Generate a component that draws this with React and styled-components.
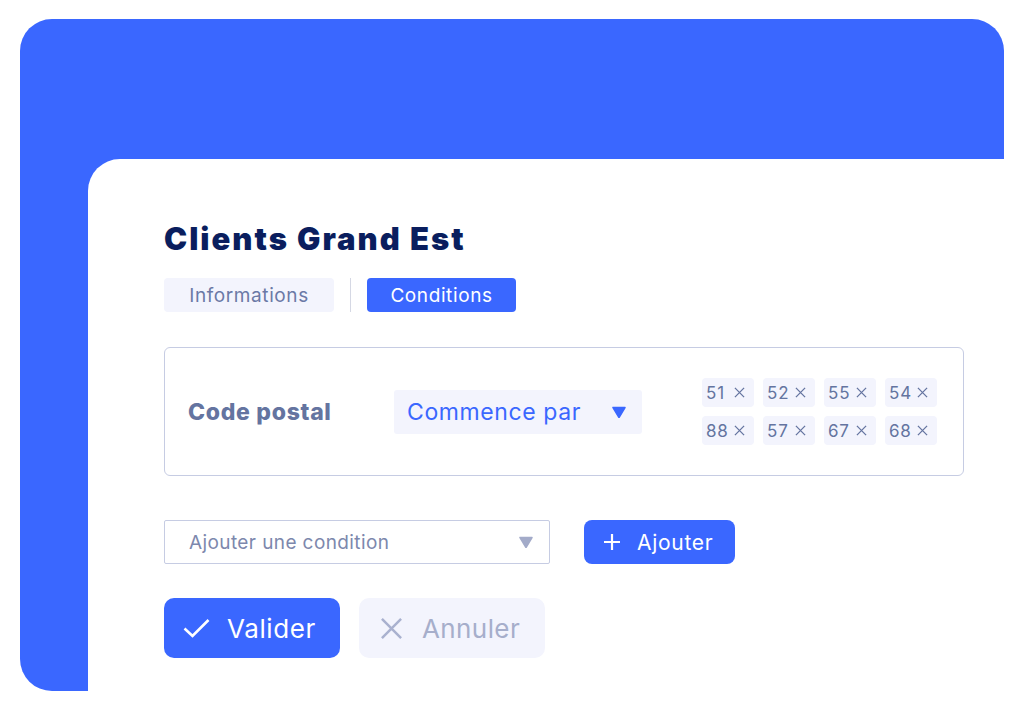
import React from 'react';
import styled, { createGlobalStyle } from 'styled-components';

const GlobalStyle = createGlobalStyle`
  html, body {
    margin: 0;
    padding: 0;
    background: #fff;
    overflow: hidden;
  }
  body {
    font-family: Inter, "Noto Sans", sans-serif;
  }
`;

const BLUE = '#3a67ff';
const PALE = '#f3f4fd';
const SLATE = '#6474a0';
const MUTED = '#a6aecb';

const Page = styled.div`
  width: 1024px;
  height: 711px;
  padding: 19px 0 0 20px;
  box-sizing: border-box;
  overflow: hidden;
`;

const Frame = styled.div`
  width: 984px;
  height: 672px;
  background: ${BLUE};
  border-radius: 32px;
  padding: 140px 0 0 68px;
  box-sizing: border-box;
`;

const Card = styled.div`
  width: calc(100% + 20px);
  height: 552px;
  background: #fff;
  border-top-left-radius: 32px;
  padding: 62px 0 0 76px;
  box-sizing: border-box;
`;

const Title = styled.h1`
  margin: 0;
  font-size: 31px;
  line-height: 36px;
  font-weight: 900;
  letter-spacing: 2px;
  color: #0a1e5e;
`;

const Tabs = styled.div`
  display: flex;
  align-items: stretch;
  gap: 16px;
  margin-top: 21px;
  height: 34px;
`;

const Tab = styled.div`
  display: flex;
  align-items: center;
  justify-content: center;
  width: ${p => p.$w}px;
  border-radius: 4px;
  font-size: 19px;
  letter-spacing: 0.6px;
  background: ${p => (p.$active ? BLUE : PALE)};
  color: ${p => (p.$active ? '#fff' : '#6b79a6')};
`;

const Divider = styled.div`
  width: 1px;
  background: #d5d8e4;
`;

const ConditionBox = styled.div`
  margin-top: 35px;
  width: 800px;
  height: 129px;
  box-sizing: border-box;
  border: 1px solid #c6cce3;
  border-radius: 6px;
  display: flex;
  align-items: center;
  padding-left: 23px;
`;

const Label = styled.div`
  width: 206px;
  font-size: 23px;
  font-weight: 800;
  letter-spacing: 0.7px;
  color: ${SLATE};
`;

const OperatorSelect = styled.div`
  width: 248px;
  height: 44px;
  background: ${PALE};
  border-radius: 3px;
  display: flex;
  align-items: center;
  justify-content: space-between;
  padding: 0 16px 0 13px;
  box-sizing: border-box;
  font-size: 23px;
  letter-spacing: 0.6px;
  color: ${BLUE};
`;

const Triangle = styled.svg`
  width: 14px;
  height: 12px;
  flex-shrink: 0;
`;

const TagGrid = styled.div`
  margin-left: 60px;
  display: grid;
  grid-template-columns: repeat(4, 52px);
  column-gap: 9px;
  row-gap: 9px;
`;

const Tag = styled.div`
  height: 29px;
  background: ${PALE};
  border-radius: 4px;
  display: flex;
  align-items: center;
  justify-content: space-between;
  padding: 0 9px 0 4px;
  font-size: 17px;
  letter-spacing: 0.8px;
  color: ${SLATE};
`;

const AddRow = styled.div`
  margin-top: 44px;
  display: flex;
  gap: 34px;
`;

const ConditionSelect = styled.div`
  width: 386px;
  height: 44px;
  box-sizing: border-box;
  border: 1px solid #c6cce3;
  border-radius: 2px;
  display: flex;
  align-items: center;
  justify-content: space-between;
  padding: 0 16px 0 24px;
  font-size: 19px;
  letter-spacing: 0.4px;
  color: #7d88ad;
`;

const Button = styled.div`
  display: flex;
  align-items: center;
  box-sizing: border-box;
  width: ${p => p.$w}px;
  height: ${p => p.$h}px;
  padding-left: ${p => p.$pl}px;
  gap: ${p => p.$gap}px;
  border-radius: ${p => (p.$h > 50 ? 10 : 8)}px;
  background: ${p => (p.$primary ? BLUE : PALE)};
  color: ${p => (p.$primary ? '#fff' : MUTED)};
  font-size: ${p => p.$fs}px;
  letter-spacing: ${p => p.$ls}px;
`;

const ActionRow = styled.div`
  margin-top: 34px;
  display: flex;
  gap: 19px;
`;

const Cross = ({ size = 11, stroke = SLATE, width = 1.4 }) => (
  <svg width={size} height={size} viewBox="0 0 12 12">
    <path d="M1 1L11 11M11 1L1 11" stroke={stroke} strokeWidth={width} fill="none" />
  </svg>
);

const Down = ({ color }) => (
  <Triangle viewBox="0 0 14 12">
    <path d="M1 1.5h12L7 11.5z" fill={color} stroke={color} strokeWidth="1.5" strokeLinejoin="round" />
  </Triangle>
);

const codes = ['51', '52', '55', '54', '88', '57', '67', '68'];

export default function App() {
  return (
    <Page>
      <GlobalStyle />
      <Frame>
        <Card>
          <Title>Clients Grand Est</Title>
          <Tabs>
            <Tab $w={170}>Informations</Tab>
            <Divider />
            <Tab $w={149} $active>Conditions</Tab>
          </Tabs>

          <ConditionBox>
            <Label>Code postal</Label>
            <OperatorSelect>
              Commence par
              <Down color={BLUE} />
            </OperatorSelect>
            <TagGrid>
              {codes.map(c => (
                <Tag key={c}>
                  {c}
                  <Cross />
                </Tag>
              ))}
            </TagGrid>
          </ConditionBox>

          <AddRow>
            <ConditionSelect>
              Ajouter une condition
              <Down color="#a3abc9" />
            </ConditionSelect>
            <Button $primary $w={151} $h={44} $pl={19} $gap={16} $fs={21} $ls={0.7}>
              <svg width="18" height="18" viewBox="0 0 18 18">
                <path d="M9 1v16M1 9h16" stroke="#fff" strokeWidth="2.2" fill="none" />
              </svg>
              Ajouter
            </Button>
          </AddRow>

          <ActionRow>
            <Button $primary $w={176} $h={60} $pl={19} $gap={17} $fs={26} $ls={0.6}>
              <svg width="27" height="20" viewBox="0 0 27 20">
                <path d="M1.5 10.5l8 7.5L25.5 2" stroke="#fff" strokeWidth="2.6" fill="none" />
              </svg>
              Valider
            </Button>
            <Button $w={186} $h={60} $pl={21} $gap={19} $fs={26} $ls={0.4}>
              <Cross size={23} stroke="#a9b1cf" width={1.3} />
              Annuler
            </Button>
          </ActionRow>
        </Card>
      </Frame>
    </Page>
  );
}
